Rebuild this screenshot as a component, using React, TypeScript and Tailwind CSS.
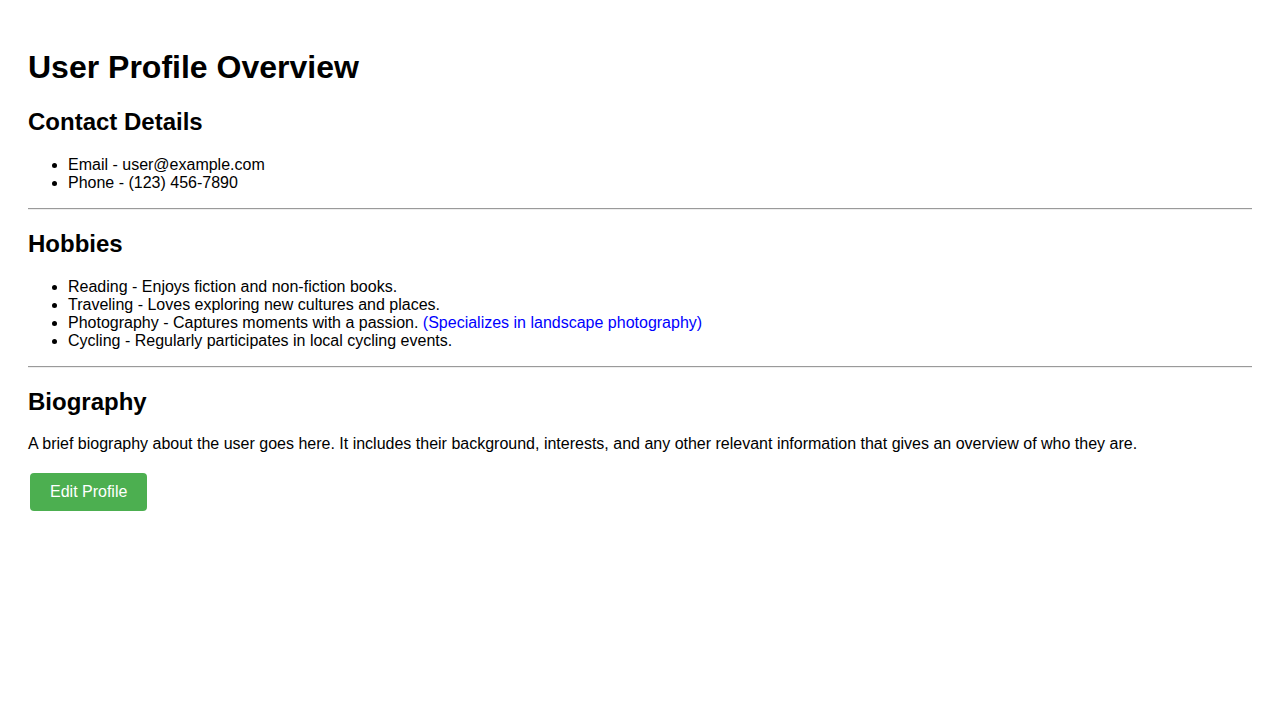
export default function App() {
  const font = { fontFamily: '"Liberation Sans", Arial, sans-serif' }
  return (
    <div style={font} className="px-[28px] pt-[28px] text-black text-[16px] leading-[normal] bg-white min-h-screen">
      <h1 className="text-[32px] font-bold my-[21.44px] leading-[normal]">User Profile Overview</h1>

      <h2 className="text-[24px] font-bold my-[19.92px] leading-[normal]">Contact Details</h2>
      <ul className="list-disc pl-10 my-4 leading-[normal]">
        <li>Email - user@example.com</li>
        <li>Phone - (123) 456-7890</li>
      </ul>

      <hr className="my-2 border-t border-b border-t-[#9a9a9a] border-b-[#eeeeee]" />

      <h2 className="text-[24px] font-bold my-[19.92px] leading-[normal]">Hobbies</h2>
      <ul className="list-disc pl-10 my-4 leading-[normal]">
        <li>Reading - Enjoys fiction and non-fiction books.</li>
        <li>Traveling - Loves exploring new cultures and places.</li>
        <li>
          Photography - Captures moments with a passion.{" "}
          <span className="text-[#0000ff]">(Specializes in landscape photography)</span>
        </li>
        <li>Cycling - Regularly participates in local cycling events.</li>
      </ul>

      <hr className="my-2 border-t border-b border-t-[#9a9a9a] border-b-[#eeeeee]" />

      <h2 className="text-[24px] font-bold my-[19.92px] leading-[normal]">Biography</h2>
      <p className="my-4 leading-[normal]">
        A brief biography about the user goes here. It includes their background, interests, and any other relevant information that gives an overview of who they are.
      </p>
      <div className="flex">
        <button className="mt-[4px] ml-[2px] rounded-[4px] bg-[#4caf50] px-5 py-[10px] text-[16px] text-white leading-[normal]">
          Edit Profile
        </button>
      </div>
    </div>
  )
}
